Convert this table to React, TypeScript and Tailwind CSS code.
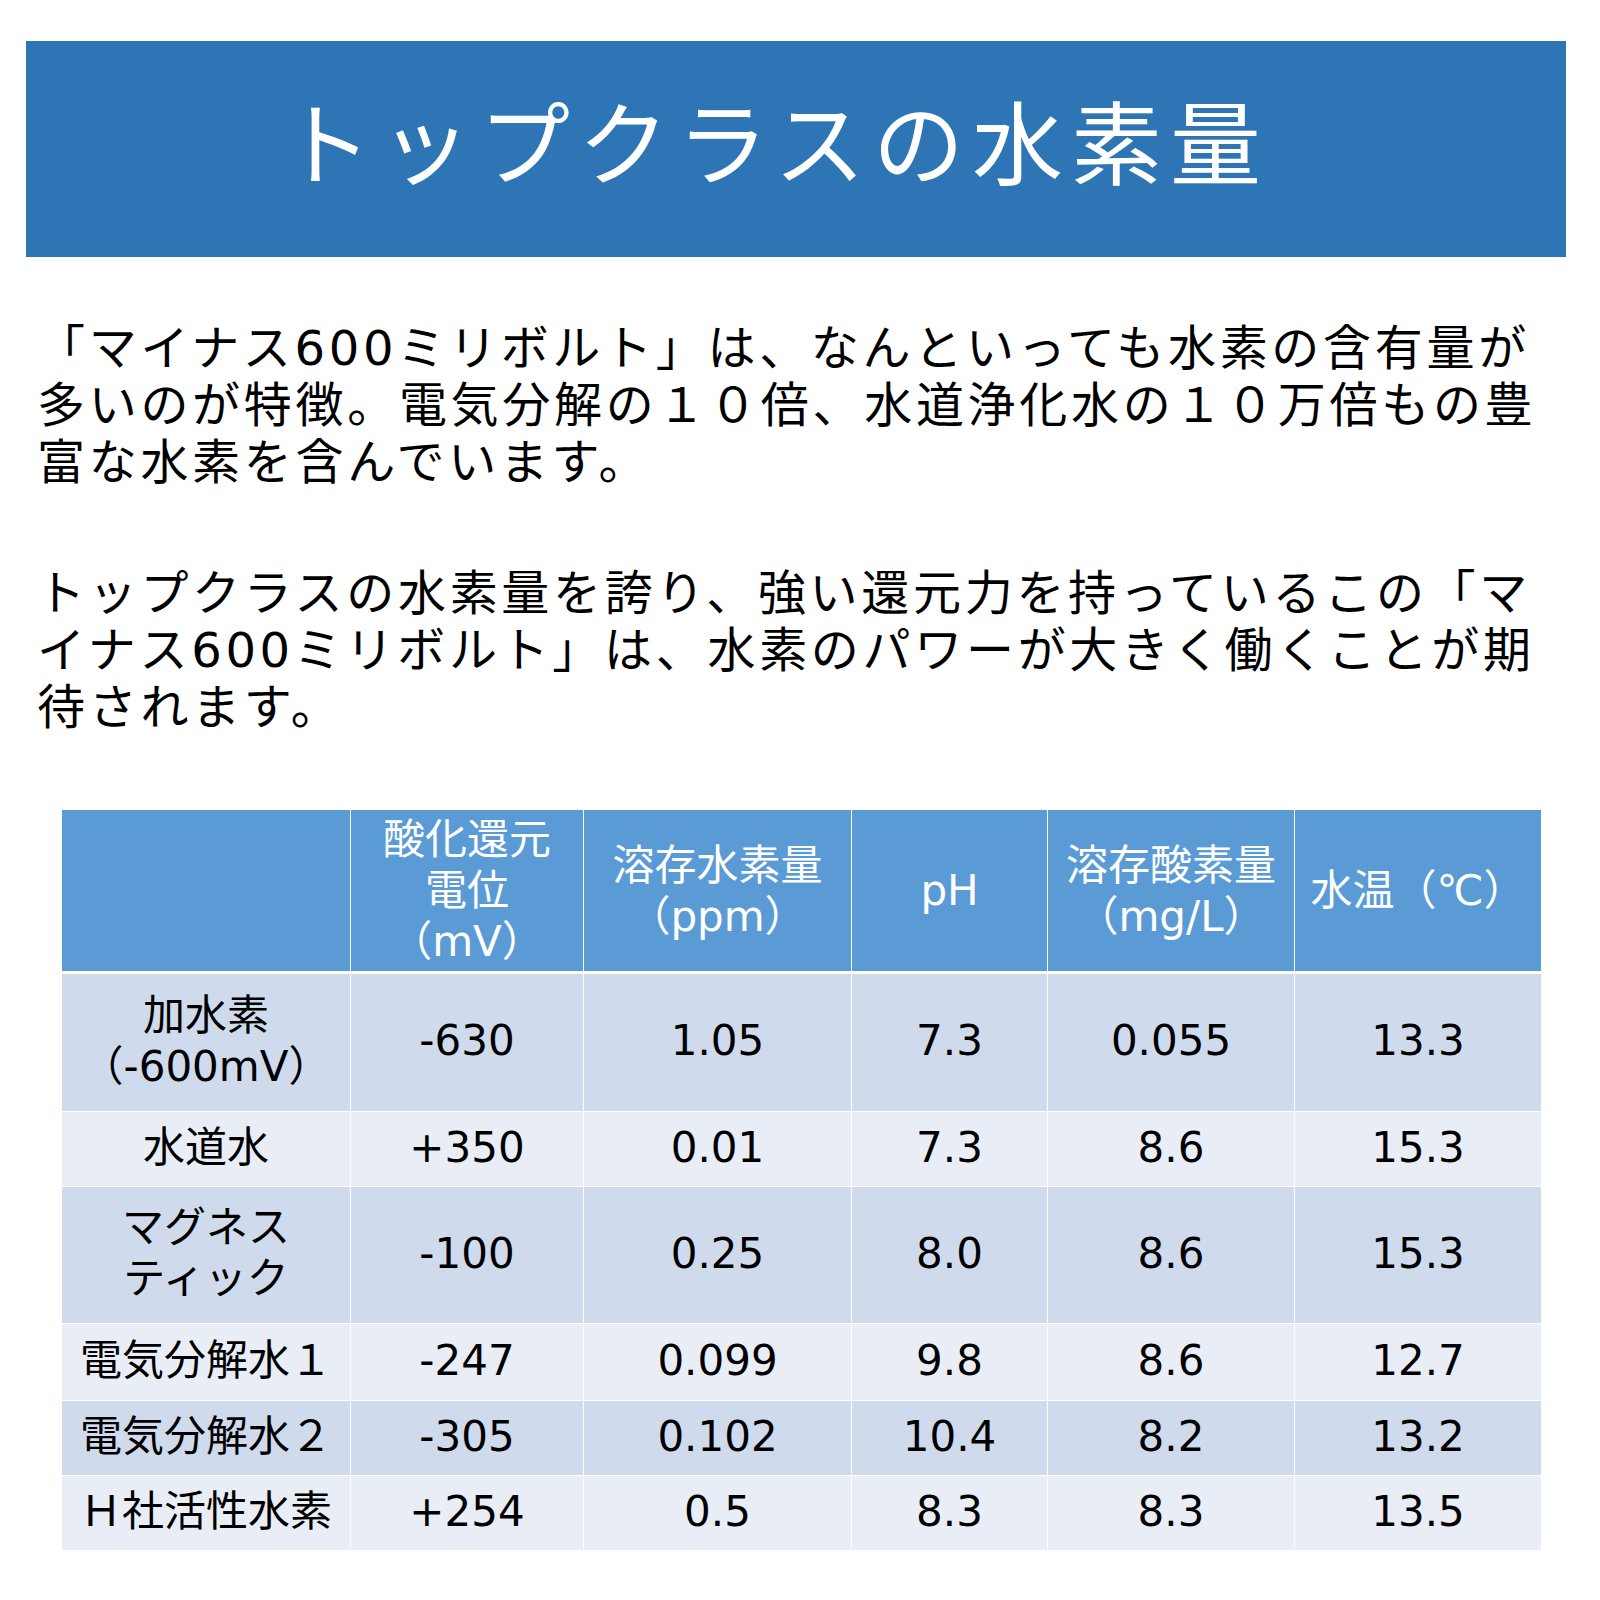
type Row = {
  label: string[];
  values: string[];
  height: string;
  bg: string;
};

const rows: Row[] = [
  {
    label: ["加水素", "（-600mV）"],
    values: ["-630", "1.05", "7.3", "0.055", "13.3"],
    height: "h-[138px]",
    bg: "bg-[#cfdbec]",
  },
  {
    label: ["水道水"],
    values: ["+350", "0.01", "7.3", "8.6", "15.3"],
    height: "h-[75px]",
    bg: "bg-[#e9eef6]",
  },
  {
    label: ["マグネス", "ティック"],
    values: ["-100", "0.25", "8.0", "8.6", "15.3"],
    height: "h-[137px]",
    bg: "bg-[#cfdbec]",
  },
  {
    label: ["電気分解水１"],
    values: ["-247", "0.099", "9.8", "8.6", "12.7"],
    height: "h-[77px]",
    bg: "bg-[#e9eef6]",
  },
  {
    label: ["電気分解水２"],
    values: ["-305", "0.102", "10.4", "8.2", "13.2"],
    height: "h-[75px]",
    bg: "bg-[#cfdbec]",
  },
  {
    label: ["Ｈ社活性水素"],
    values: ["+254", "0.5", "8.3", "8.3", "13.5"],
    height: "h-[75px]",
    bg: "bg-[#e9eef6]",
  },
];

const headers: string[][] = [
  [],
  ["酸化還元", "電位", "（mV）"],
  ["溶存水素量", "（ppm）"],
  ["pH"],
  ["溶存酸素量", "（mg/L）"],
  ["水温（℃）"],
];

const Lines = ({ lines }: { lines: string[] }) => (
  <>
    {lines.map((line, i) => (
      <div key={i}>{line}</div>
    ))}
  </>
);

export default function App() {
  return (
    <div className="w-[1600px] h-[1600px] bg-white text-black font-['DejaVu_Sans','Noto_Sans_CJK_JP',sans-serif]">
      <div className="pt-[41px] pl-[26px]">
        <div className="w-[1540px] h-[216px] bg-[#2e75b6] flex items-center justify-center pr-[42px] pb-[6px]">
          <h1 className="text-[91px] leading-none tracking-[8px] text-white font-normal">
            トップクラスの水素量
          </h1>
        </div>
      </div>

      <div className="ml-[37px] mt-[63px] w-[1512px] text-[48px] leading-[57px] tracking-[3.7px]">
        <p>
          「マイナス600ミリボルト」は、なんといっても水素の含有量が多いのが特徴。電気分解の１０倍、水道浄化水の１０万倍もの豊富な水素を含んでいます。
        </p>
        <p className="mt-[74px]">
          トップクラスの水素量を誇り、強い還元力を持っているこの「マイナス600ミリボルト」は、水素のパワーが大きく働くことが期待されます。
        </p>
      </div>

      <table className="ml-[62px] mt-[74px] w-[1480px] table-fixed border-separate border-spacing-0 text-[42px] leading-[51px]">
        <colgroup>
          <col className="w-[289px]" />
          <col className="w-[233px]" />
          <col className="w-[268px]" />
          <col className="w-[196px]" />
          <col className="w-[247px]" />
          <col className="w-[247px]" />
        </colgroup>
        <thead>
          <tr className="h-[164px]">
            {headers.map((h, i) => (
              <th
                key={i}
                className="p-0 bg-[#5b9bd5] text-white font-normal text-center align-middle border-b-[3px] border-r border-white"
              >
                <Lines lines={h} />
              </th>
            ))}
          </tr>
        </thead>
        <tbody>
          {rows.map((row, r) => (
            <tr key={r} className={row.height}>
              <td
                className={`p-0 pb-[4px] text-center align-middle border-r border-b border-white ${row.bg}`}
              >
                <Lines lines={row.label} />
              </td>
              {row.values.map((v, i) => (
                <td
                  key={i}
                  className={`p-0 pb-[4px] text-center align-middle border-r border-b border-white ${row.bg}`}
                >
                  {v}
                </td>
              ))}
            </tr>
          ))}
        </tbody>
      </table>
    </div>
  );
}
